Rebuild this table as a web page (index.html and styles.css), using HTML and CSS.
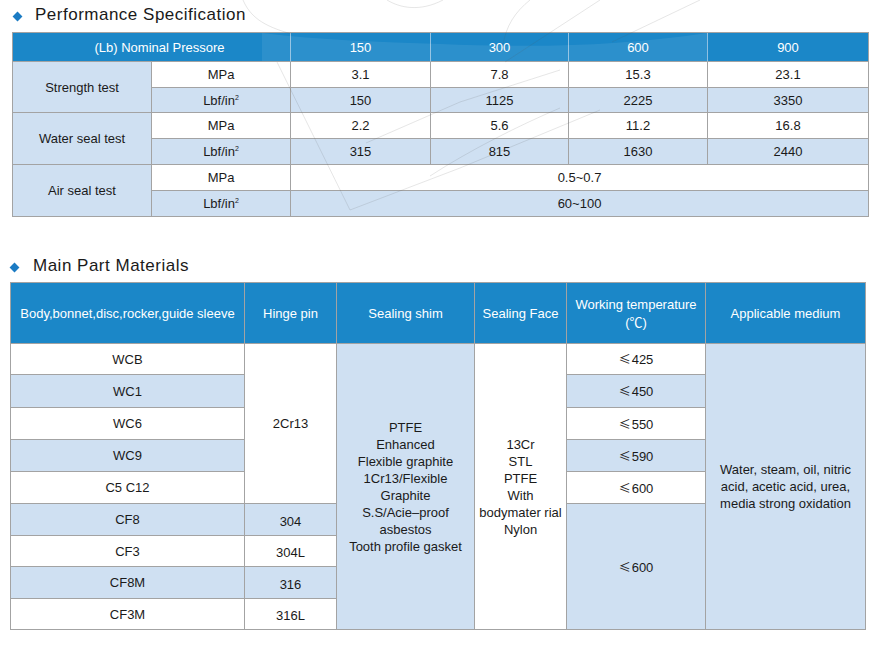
FILE: index.html
```html
<!DOCTYPE html>
<html lang="en">
<head>
<meta charset="utf-8">
<title>Performance Specification</title>
<link rel="stylesheet" href="styles.css">
</head>
<body>
<section class="sec sec-perf">
  <h2 class="title"><span class="dot"></span><span>Performance Specification</span></h2>
  <div class="grid perf">
    <div class="c h hc2 first"><span>(Lb) Nominal Pressore</span></div>
    <div class="c h"><span>150</span></div>
    <div class="c h"><span>300</span></div>
    <div class="c h"><span>600</span></div>
    <div class="c h last"><span>900</span></div>

    <div class="c b r2"><span>Strength test</span></div>
    <div class="c w"><span>MPa</span></div>
    <div class="c w"><span>3.1</span></div>
    <div class="c w"><span>7.8</span></div>
    <div class="c w"><span>15.3</span></div>
    <div class="c w"><span>23.1</span></div>
    <div class="c b"><span>Lbf/in<sup>2</sup></span></div>
    <div class="c b"><span>150</span></div>
    <div class="c b"><span>1125</span></div>
    <div class="c b"><span>2225</span></div>
    <div class="c b"><span>3350</span></div>

    <div class="c b r2"><span>Water seal test</span></div>
    <div class="c w"><span>MPa</span></div>
    <div class="c w"><span>2.2</span></div>
    <div class="c w"><span>5.6</span></div>
    <div class="c w"><span>11.2</span></div>
    <div class="c w"><span>16.8</span></div>
    <div class="c b"><span>Lbf/in<sup>2</sup></span></div>
    <div class="c b"><span>315</span></div>
    <div class="c b"><span>815</span></div>
    <div class="c b"><span>1630</span></div>
    <div class="c b"><span>2440</span></div>

    <div class="c b r2"><span>Air seal test</span></div>
    <div class="c w"><span>MPa</span></div>
    <div class="c w s4"><span>0.5~0.7</span></div>
    <div class="c b"><span>Lbf/in<sup>2</sup></span></div>
    <div class="c b s4"><span>60~100</span></div>
  </div>
</section>

<section class="sec sec-mat">
  <h2 class="title"><span class="dot"></span><span>Main Part Materials</span></h2>
  <div class="grid mat">
    <div class="c h"><span>Body,bonnet,disc,rocker,guide sleeve</span></div>
    <div class="c h"><span>Hinge pin</span></div>
    <div class="c h"><span>Sealing shim</span></div>
    <div class="c h"><span>Sealing Face</span></div>
    <div class="c h"><span>Working temperature<br>(<span class="cjk">℃</span>)</span></div>
    <div class="c h"><span>Applicable medium</span></div>

    <div class="c w"><span>WCB</span></div>
    <div class="c w r5"><span>2Cr13</span></div>
    <div class="c b r9"><span>PTFE<br>Enhanced<br>Flexible graphite<br>1Cr13/Flexible<br>Graphite<br>S.S/Acie–proof<br>asbestos<br>Tooth profile gasket</span></div>
    <div class="c w r9"><span>13Cr<br>STL<br>PTFE<br>With<br>bodymater rial<br>Nylon</span></div>
    <div class="c w"><span><span class="le">≤</span>425</span></div>
    <div class="c b r9"><span>Water, steam, oil, nitric<br>acid, acetic acid, urea,<br>media strong oxidation</span></div>

    <div class="c b"><span>WC1</span></div>
    <div class="c b"><span><span class="le">≤</span>450</span></div>
    <div class="c w"><span>WC6</span></div>
    <div class="c w"><span><span class="le">≤</span>550</span></div>
    <div class="c b"><span>WC9</span></div>
    <div class="c b"><span><span class="le">≤</span>590</span></div>
    <div class="c w"><span>C5 C12</span></div>
    <div class="c w"><span><span class="le">≤</span>600</span></div>

    <div class="c b"><span>CF8</span></div>
    <div class="c b low"><span>304</span></div>
    <div class="c b r4"><span><span class="le">≤</span>600</span></div>
    <div class="c w"><span>CF3</span></div>
    <div class="c w low"><span>304L</span></div>
    <div class="c b"><span>CF8M</span></div>
    <div class="c b low"><span>316</span></div>
    <div class="c w"><span>CF3M</span></div>
    <div class="c w low"><span>316L</span></div>
  </div>
</section>

<svg class="watermark" width="885" height="654" viewBox="0 0 885 654" aria-hidden="true">
  <path d="M262 33 C320 40 380 42 440 44 C540 48 620 46 707 33 L707 61 L262 61 Z" fill="rgba(255,255,255,0.08)"/>
  <g fill="none" stroke="rgba(90,90,90,0.15)" stroke-width="1">
    <path d="M243 0 C250 16 262 26 292 34"/>
    <path d="M387 0 C400 8 420 12 443 0"/>
    <path d="M530 0 C515 12 506 26 503 45"/>
    <path d="M505 62 L600 0"/>
    <path d="M612 42 L700 0"/>
    <path d="M277 62 L350 210 L460 168 L600 110"/>
    <path d="M366 143 L460 102 L560 70"/>
    <path d="M430 176 C470 150 520 125 560 108"/>
  </g>
</svg>
</body>
</html>
```

FILE: styles.css
```css
html, body {
  margin: 0;
  padding: 0;
  background: #ffffff;
}

body {
  position: relative;
  width: 885px;
  height: 654px;
  overflow: hidden;
  font-family: "Liberation Sans", Arial, Helvetica, sans-serif;
  font-size: 13px;
  color: #1a1a1a;
}

.sec-perf {
  padding-left: 12px;
}

.sec-mat {
  padding-left: 10px;
  margin-top: 35px;
}

.title {
  display: flex;
  align-items: center;
  height: 28px;
  margin: 0;
  font-size: 17px;
  font-weight: normal;
  letter-spacing: 0.5px;
  color: #1a1a1a;
}

.sec-perf .title {
  height: 29px;
  margin-bottom: 3px;
}

.sec-mat .title {
  margin-bottom: 2px;
}

.dot {
  width: 7px;
  height: 7px;
  margin-top: 3px;
  background: #1b7bc3;
  transform: rotate(45deg);
  flex: none;
}

.sec-perf .dot {
  margin-left: 2px;
  margin-right: 14px;
}

.sec-mat .dot {
  margin-left: 1px;
  margin-right: 15px;
}

.grid {
  display: grid;
  border-left: 1px solid #a3a3a3;
  border-top: 1px solid #a3a3a3;
}

.perf {
  width: 857px;
  box-sizing: border-box;
  grid-template-columns: 139px 139px 140px 138px 139px 161px;
  grid-template-rows: 29px 26px 25px 26px 26px 26px 26px;
}

.mat {
  width: 856px;
  box-sizing: border-box;
  grid-template-columns: 234px 92px 138px 92px 139px 160px;
  grid-template-rows: 61px 31px 33px 32px 32px 32px 32px 31px 32px 31px;
}

.c {
  display: flex;
  align-items: center;
  justify-content: center;
  text-align: center;
  box-sizing: border-box;
  border-right: 1px solid #a3a3a3;
  border-bottom: 1px solid #a3a3a3;
  line-height: 17px;
  white-space: nowrap;
}

.w {
  background: #ffffff;
}

.b {
  background: #cfe0f2;
}

.h {
  background: #1b87c8;
  color: #ffffff;
}

.perf .h {
  border-right-color: #8fc0e2;
}

.perf .h.last {
  border-right-color: #a3a3a3;
}

.hc2 {
  grid-column: span 2;
  padding-left: 16px;
}

.s4 {
  grid-column: span 4;
}

.r2 {
  grid-row: span 2;
}

.r4 {
  grid-row: span 4;
}

.r5 {
  grid-row: span 5;
}

.r9 {
  grid-row: span 9;
}

.low {
  padding-top: 3px;
}

sup {
  font-size: 7px;
  line-height: 0;
  vertical-align: 5px;
}

.le {
  font-family: "Noto Sans CJK SC", "DejaVu Sans", sans-serif;
  font-size: 12px;
  margin-right: 1px;
}

.cjk {
  font-family: "Noto Sans CJK SC", "DejaVu Sans", sans-serif;
  font-size: 13px;
}

.watermark {
  position: absolute;
  left: 0;
  top: 0;
  pointer-events: none;
}
```
